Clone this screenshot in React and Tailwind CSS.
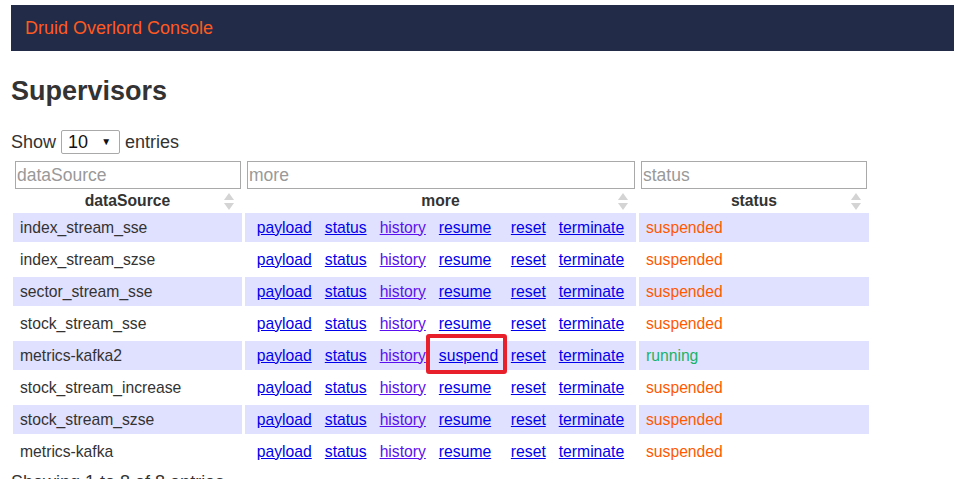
const rows = [
  { name: "index_stream_sse", status: "suspended" },
  { name: "index_stream_szse", status: "suspended" },
  { name: "sector_stream_sse", status: "suspended" },
  { name: "stock_stream_sse", status: "suspended" },
  { name: "metrics-kafka2", status: "running" },
  { name: "stock_stream_increase", status: "suspended" },
  { name: "stock_stream_szse", status: "suspended" },
  { name: "metrics-kafka", status: "suspended" },
];

function SortIcon() {
  return (
    <svg width="10" height="18" viewBox="0 0 10 18" className="absolute right-[8px] top-[1px]">
      <polygon points="5,0 10,7 0,7" fill="#d4d4d4" />
      <polygon points="0,10 10,10 5,17" fill="#d4d4d4" />
    </svg>
  );
}

function Links({ running }) {
  const link = "text-[#0000ee] underline";
  return (
    <div className="flex justify-center gap-[13px]">
      <a className={link}>payload</a>
      <a className={link}>status</a>
      <a className="text-[#5a10f0] underline">history</a>
      <span className="w-[59px]">
        {running ? (
          <span className="relative">
            <a className={link}>suspend</a>
            <span className="absolute left-[-13px] right-[-9px] top-[-13px] bottom-[-10px] rounded-[3px] border-[4px] border-[#e8202c]" />
          </span>
        ) : (
          <a className={link}>resume</a>
        )}
      </span>
      <a className={link}>reset</a>
      <a className={link}>terminate</a>
    </div>
  );
}

export default function App() {
  return (
    <div className="min-h-screen bg-white pt-[5px] pl-[11px] text-[16px] text-[#333] font-['Liberation_Sans',Arial,sans-serif]">
      <div className="flex h-[46px] items-center bg-[#222b48] pl-[14px]">
        <span className="text-[18px] text-[#ff5a1f]">Druid Overlord Console</span>
      </div>

      <h2 className="mt-[25px] text-[27px] font-bold leading-[30px] text-[#333]">Supervisors</h2>

      <div className="mt-[24px] flex items-center text-[18px] leading-[22px]">
        <span>Show</span>
        <div className="mx-[5px] flex h-[24px] w-[59px] items-center justify-between rounded-[2px] border border-[#a9a9a9] pl-[6px] pr-[8px]">
          <span className="text-[18px] text-[#111]">10</span>
          <span className="text-[10px] text-[#111]">▼</span>
        </div>
        <span>entries</span>
      </div>

      <table className="-ml-[1px] mt-[4px] border-separate border-spacing-[3px] text-[15.7px]">
        <thead>
          <tr>
            <td className="p-0 pl-[2px]">
              <input placeholder="dataSource" className="h-[28px] w-[226px] border border-[#a9a9a9] px-[1px] text-[17.5px] placeholder:text-[#999]" />
            </td>
            <td className="p-0 pl-[2px]">
              <input placeholder="more" className="h-[28px] w-[388px] border border-[#a9a9a9] px-[1px] text-[17.5px] placeholder:text-[#999]" />
            </td>
            <td className="p-0 pl-[2px]">
              <input placeholder="status" className="h-[28px] w-[226px] border border-[#a9a9a9] px-[1px] text-[17.5px] placeholder:text-[#999]" />
            </td>
          </tr>
          <tr>
            <th className="relative h-[18px] w-[229px] p-0 leading-[18px]">
              dataSource
              <SortIcon />
            </th>
            <th className="relative h-[18px] w-[391px] p-0 leading-[18px]">
              more
              <SortIcon />
            </th>
            <th className="relative h-[18px] w-[230px] p-0 leading-[18px]">
              status
              <SortIcon />
            </th>
          </tr>
        </thead>
        <tbody>
          {rows.map((r, i) => (
            <tr key={r.name} className={i % 2 === 0 ? "bg-[#e0e0ff]" : "bg-white"}>
              <td className="h-[29px] px-[7px] py-0">{r.name}</td>
              <td className="h-[29px] p-0">
                <Links running={r.status === "running"} />
              </td>
              <td
                className={
                  "h-[29px] px-[7px] py-0 " +
                  (r.status === "running" ? "text-[#1ab366]" : "text-[#ff5a00]")
                }
              >
                {r.status}
              </td>
            </tr>
          ))}
        </tbody>
      </table>

      <div className="mt-[0px] text-[18px]">Showing 1 to 8 of 8 entries</div>
    </div>
  );
}
